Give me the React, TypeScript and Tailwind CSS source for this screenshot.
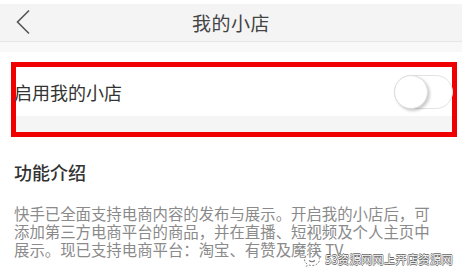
import React from "react";

export default function App() {
  return (
    <div
      className="relative w-[462px] h-[279px] overflow-hidden bg-white"
      style={{ fontFamily: '"Noto Sans CJK SC", "Noto Sans", sans-serif' }}
    >
      <div className="h-[4px] bg-white" />
      <div className="relative flex h-[38px] items-center justify-center border-b border-[#e6e6e6] bg-[#f4f4f4]">
        <svg
          className="absolute left-[15px] top-[5px]"
          width="16"
          height="26"
          viewBox="0 0 16 26"
        >
          <polyline
            points="14,1.5 2.5,13 14,24.5"
            fill="none"
            stroke="#555"
            strokeWidth="1.6"
          />
        </svg>
        <span className="text-[19px] leading-none text-[#444] tracking-[0.5px]">我的小店</span>
      </div>
      <div className="h-[10px] bg-[#f8f8f8]" />
      <div className="h-[10px] bg-white" />
      <div className="ml-[11px] w-[446px] border-[5px] border-[#f00000]">
        <div className="flex h-[49px] items-center justify-between bg-white">
          <span className="-ml-[2px] text-[18px] leading-none text-[#333]">启用我的小店</span>
          <div className="relative mr-[-1px] h-[34px] w-[59px] rounded-full border border-[#e3e3e3] bg-white">
            <div className="absolute left-[-1px] top-[-1px] h-[34px] w-[34px] rounded-full border border-[#ddd] bg-white shadow-[2px_2px_3px_rgba(0,0,0,0.2)]" />
          </div>
        </div>
        <div className="h-[16px] bg-[#f5f5f5]" />
      </div>
      <div className="px-[14px] pt-[25px]">
        <div className="text-[18px] leading-[20px] font-medium text-[#333]">功能介绍</div>
        <div className="mt-[22px] text-[15.4px] leading-[18px] text-[#8a8a8a]">
          <div>快手已全面支持电商内容的发布与展示。开启我的小店后，可</div>
          <div>添加第三方电商平台的商品，并在直播、短视频及个人主页中</div>
          <div>展示。现已支持电商平台：淘宝、有赞及魔筷 TV</div>
        </div>
      </div>
      <div className="absolute left-[303px] top-[252px] flex items-center gap-[4px]">
        <svg width="18" height="16" viewBox="0 0 18 16">
          <path
            d="M9 1.5 C4.5 1.5 1.5 4.3 1.5 7.5 C1.5 9.3 2.5 10.9 4 12 L3.4 14.3 L6 13 C7 13.4 8 13.5 9 13.5 C13.5 13.5 16.5 10.7 16.5 7.5 C16.5 4.3 13.5 1.5 9 1.5 Z"
            fill="none"
            stroke="#888"
            strokeWidth="1"
            strokeDasharray="2 1.5"
          />
          <path d="M6 8.5 Q9 11 12 8.5" fill="none" stroke="#777" strokeWidth="1.1" />
        </svg>
        <span className="text-[11.5px] leading-none text-white [text-shadow:0.6px_0_0_#666,-0.6px_0_0_#666,0_0.6px_0_#666,0_-0.6px_0_#666]">
          53资源网网上开店资源网
        </span>
      </div>
    </div>
  );
}
